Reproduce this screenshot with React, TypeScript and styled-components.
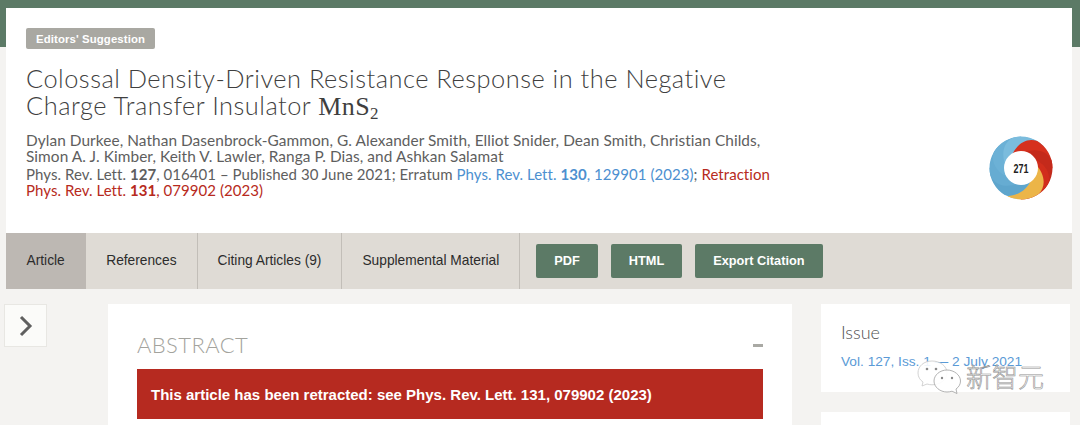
import React from "react";
import styled, { createGlobalStyle } from "styled-components";

const Global = createGlobalStyle`
  html, body { margin: 0; padding: 0; }
  body { background: #f4f3f1; font-family: "Lato", "Liberation Sans", sans-serif; overflow: hidden; }
`;

const Page = styled.div`
  position: relative;
  width: 1080px;
  height: 425px;
  overflow: hidden;
  box-sizing: border-box;
  padding: 8px 8px 0 6px;
  background: linear-gradient(#5c7a66 47px, #f4f3f1 47px);
`;

const Header = styled.header`
  display: flex;
  justify-content: space-between;
  height: 225px;
  box-sizing: border-box;
  background: #fff;
  padding: 20px 19px 0 20px;
`;

const HeadText = styled.div`
  width: 770px;
`;

const Badge = styled.span`
  display: block;
  width: fit-content;
  height: 21px;
  padding: 0 10px;
  border-radius: 2px;
  background: #a9a8a2;
  color: #fff;
  font: 700 11.4px/22px "Liberation Sans", sans-serif;
  letter-spacing: 0.1px;
`;

const Title = styled.h1`
  margin: 15.5px 0 0;
  width: 750px;
  font: 300 25.4px/27px "Lato", sans-serif;
  letter-spacing: 0.5px;
  color: #3f3f3f;
`;

const Formula = styled.span`
  font-family: "Liberation Serif", serif;
  font-weight: 400;
  font-size: 26px;
  letter-spacing: 0.4px;
  sub {
    font-size: 17px;
    line-height: 0;
    vertical-align: -4px;
  }
`;

const Authors = styled.p`
  margin: 12px 0 0;
  font: 400 15.4px/16px "Lato", sans-serif;
  letter-spacing: 0.07px;
  color: #5e5e5e;
  white-space: nowrap;
`;

const Citation = styled.p`
  margin: 2px 0 0;
  font: 400 15px/16px "Lato", sans-serif;
  letter-spacing: 0.05px;
  color: #5e5e5e;
  white-space: nowrap;
  b { font-weight: 700; }
`;

const CiteLink = styled.span<{ $tone: "blue" | "red" }>`
  color: ${(p) => (p.$tone === "blue" ? "#4d90d0" : "#b72a20")};
`;

const Donut = styled.svg`
  width: 64px;
  height: 64px;
  margin-top: 108px;
  flex: none;
`;

const TabBar = styled.nav`
  display: flex;
  align-items: center;
  height: 56px;
  background: #dfdbd5;
`;

const Tab = styled.div<{ $active?: boolean }>`
  display: flex;
  align-items: center;
  height: 100%;
  box-sizing: border-box;
  padding: 0 ${(p) => (p.$active ? "20.500px" : "20px")} 1px;
  border-right: 1px solid ${(p) => (p.$active ? "transparent" : "#c2beb8")};
  background: ${(p) => (p.$active ? "#bdb8b3" : "transparent")};
  font: 400 13.750px "Liberation Sans", sans-serif;
  color: #2c2c2c;
`;

const Actions = styled.div`
  display: flex;
  gap: 13px;
  margin-left: 16px;
`;

const Action = styled.div`
  height: 34px;
  box-sizing: border-box;
  display: flex;
  align-items: center;
  padding: 0 18px 1px;
  border-radius: 2px;
  background: #5c7a66;
  color: #fff;
  font: 700 12.750px "Liberation Sans", sans-serif;
`;

const Lower = styled.div`
  display: flex;
  align-items: flex-start;
  margin: 15px 0 0 -2px;
`;

const Toggle = styled.div`
  width: 43px;
  height: 43px;
  flex: none;
  display: flex;
  align-items: center;
  justify-content: center;
  box-sizing: border-box;
  border: 1px solid #e8e7e3;
  background: #fbfbf9;
`;

const Main = styled.main`
  width: 684px;
  height: 130px;
  flex: none;
  margin-left: 61px;
  box-sizing: border-box;
  background: #fff;
  padding: 27px 29px 0;
`;

const AbstractHead = styled.div`
  display: flex;
  align-items: center;
  justify-content: space-between;
`;

const AbstractTitle = styled.h2`
  margin: 0;
  font: 300 22px/28px "Lato", sans-serif;
  letter-spacing: 0.4px;
  color: #a3a39d;
`;

const Collapse = styled.span`
  width: 10px;
  height: 3px;
  background: #a9a9a4;
`;

const Retracted = styled.div`
  height: 50px;
  margin-top: 10px;
  display: flex;
  align-items: center;
  padding-left: 14px;
  background: #b62a20;
  color: #fff;
  font: 700 15px "Liberation Sans", sans-serif;
`;

const Side = styled.aside`
  width: 249px;
  flex: none;
  margin-left: 29px;
  display: flex;
  flex-direction: column;
  gap: 20px;
`;

const SideCard = styled.section`
  height: 88px;
  box-sizing: border-box;
  background: #fff;
  padding: 17px 20px 0;
`;

const SideTitle = styled.h3`
  margin: 0;
  font: 300 18px/22px "Lato", sans-serif;
  color: #4f4f4f;
`;

const IssueLink = styled.div`
  margin-top: 10px;
  font: 400 13.7px/18px "Liberation Sans", sans-serif;
  color: #5a9ad6;
  white-space: nowrap;
`;

const Watermark = styled.div`
  position: absolute;
  left: 917px;
  top: 360px;
  display: flex;
  align-items: center;
  gap: 5px;
  pointer-events: none;
`;

const WatermarkText = styled.span`
  margin-top: -3px;
  font: 300 26px/1 "Noto Sans CJK SC", sans-serif;
  color: rgba(255, 255, 255, 0.85);
  -webkit-text-stroke: 0.6px #8f8f8f;
`;

const BLADES: { angle: number; color: string }[] = [
  { angle: 141, color: "#5ea5cc" },
  { angle: 186, color: "#66acd2" },
  { angle: 231, color: "#6cb1d6" },
  { angle: 276, color: "#7bbcdd" },
  { angle: 321, color: "#d6301d" },
  { angle: 6, color: "#c42a1b" },
  { angle: 51, color: "#d12e1c" },
  { angle: 76, color: "#ecb548" },
];

const BLADE_PATH =
  "M0 -15C12 -22 24 -20 29.600 -10.800A31.500 31.500 0 0 1 24.100 20.200C26 8 22 -2 13 -7.500Z";

export default function App() {
  return (
    <Page>
      <Global />
      <Header>
        <HeadText>
          <Badge>Editors' Suggestion</Badge>
          <Title>
            Colossal Density-Driven Resistance Response in the Negative Charge Transfer Insulator{" "}
            <Formula>
              MnS<sub>2</sub>
            </Formula>
          </Title>
          <Authors>
            Dylan Durkee, Nathan Dasenbrock-Gammon, G. Alexander Smith, Elliot Snider, Dean Smith, Christian Childs,
            <br />
            Simon A. J. Kimber, Keith V. Lawler, Ranga P. Dias, and Ashkan Salamat
          </Authors>
          <Citation>
            Phys. Rev. Lett. <b>127</b>, 016401 – Published 30 June 2021; Erratum{" "}
            <CiteLink $tone="blue">
              Phys. Rev. Lett. <b>130</b>, 129901 (2023)
            </CiteLink>
            ; <CiteLink $tone="red">Retraction</CiteLink>
            <br />
            <CiteLink $tone="red">
              Phys. Rev. Lett. <b>131</b>, 079902 (2023)
            </CiteLink>
          </Citation>
        </HeadText>
        <Donut viewBox="0 0 64 64" role="img" aria-label="Altmetric score 271">
          <g transform="translate(32 32)">
            <circle r="31" fill="#6cb1d6" />
            {BLADES.map((b) => (
              <path key={b.angle} d={BLADE_PATH} fill={b.color} transform={`rotate(${b.angle})`} />
            ))}
            <circle r="17" fill="#fff" />
            <text
              y="5"
              textAnchor="middle"
              fontFamily="Liberation Sans, sans-serif"
              fontSize="13.500"
              fontWeight="700"
              fill="#222"
              textLength="15"
              lengthAdjust="spacingAndGlyphs"
            >
              271
            </text>
          </g>
        </Donut>
      </Header>
      <TabBar>
        <Tab $active>Article</Tab>
        <Tab>References</Tab>
        <Tab>Citing Articles (9)</Tab>
        <Tab>Supplemental Material</Tab>
        <Actions>
          <Action>PDF</Action>
          <Action>HTML</Action>
          <Action>Export Citation</Action>
        </Actions>
      </TabBar>
      <Lower>
        <Toggle>
          <svg width="16" height="24" viewBox="0 0 16 24" fill="none" stroke="#5f5f5f" strokeWidth="3">
            <path d="M3 3l9 9-9 9" />
          </svg>
        </Toggle>
        <Main>
          <AbstractHead>
            <AbstractTitle>ABSTRACT</AbstractTitle>
            <Collapse />
          </AbstractHead>
          <Retracted>This article has been retracted: see Phys. Rev. Lett. 131, 079902 (2023)</Retracted>
        </Main>
        <Side>
          <SideCard>
            <SideTitle>Issue</SideTitle>
            <IssueLink>Vol. 127, Iss. 1 — 2 July 2021</IssueLink>
          </SideCard>
          <SideCard />
        </Side>
      </Lower>
      <Watermark>
        <svg width="44" height="34" viewBox="0 0 44 34" fill="rgba(255,255,255,0.9)" stroke="#a0a0a0" strokeWidth="0.8">
          <path d="M15 1C7 1 1 6 1 13c0 4 2 7 5 9l-1 4 5-2c2 .5 3 .8 5 .8 8 0 15-5 15-11.800C30 6 23 1 15 1Z" stroke="#c8c8c8" />
          <path d="M30 10c-7 0-13 5-13 11s6 11 13 11c2 0 3-.3 5-.8l5 2.300-1-4.500c3-2 4.500-5 4.500-8C43.500 15 37 10 30 10Z" />
          <circle cx="10" cy="9" r="1.300" fill="#8a8a8a" stroke="none" />
          <circle cx="19" cy="9" r="1.300" fill="#8a8a8a" stroke="none" />
          <circle cx="25" cy="18" r="1.200" fill="#8a8a8a" stroke="none" />
          <circle cx="35" cy="18" r="1.200" fill="#8a8a8a" stroke="none" />
        </svg>
        <WatermarkText>新智元</WatermarkText>
      </Watermark>
    </Page>
  );
}
